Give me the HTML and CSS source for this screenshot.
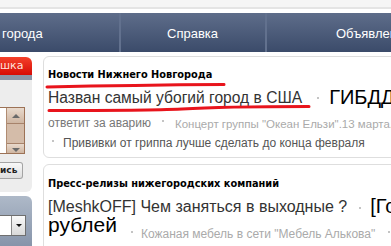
FILE: index.html
```html
<!DOCTYPE html>
<html lang="ru">
<head>
<meta charset="utf-8">
<link rel="stylesheet" href="styles.css">
</head>
<body>
<div class="top"></div>
<nav class="nav">
  <div class="nav-item i1">города</div>
  <div class="nav-item i2">Справка</div>
  <div class="nav-item i3">Объявления</div>
</nav>
<div class="layout">
  <aside class="side">
    <div class="side-head">шка</div>
    <div class="side-strip"></div>
    <div class="side-panel">
      <div class="ta">
        <div class="ta-field"></div>
        <div class="ta-scroll">
          <span class="sb-btn up"></span>
          <span class="sb-track"></span>
          <span class="sb-btn down"></span>
        </div>
      </div>
      <div class="btn">ись</div>
    </div>
    <div class="side-panel2">
      <div class="sel"><span class="sel-field"></span><span class="sel-btn"></span></div>
    </div>
  </aside>
  <main class="main">
    <section class="card c1">
      <h2 class="title">Новости Нижнего Новгорода</h2>
      <div class="row r1">
        <span class="big h1">Назван самый убогий город в США</span>
        <span class="dot d1"></span>
        <span class="huge">ГИБДД</span>
      </div>
      <div class="row r2">
        <span class="mid">ответит за аварию</span>
        <span class="dot d2"></span>
        <span class="small">Концерт группы "Океан Ельзи".13 марта.Концерт</span>
      </div>
      <div class="row r3">
        <span class="dot d3"></span>
        <span class="mid dark">Прививки от гриппа лучше сделать до конца февраля</span>
      </div>
      <svg class="marker" width="300" height="60" viewBox="0 0 300 60">
        <path d="M3 30 Q 90 28 180 27.5" />
        <path d="M5 53.5 C 60 53.5, 115 53, 138 52 C 170 50, 220 49.5, 265 49.5" />
      </svg>
    </section>
    <section class="card c2">
      <h2 class="title">Пресс-релизы нижегородских компаний</h2>
      <div class="row r4">
        <span class="big">[MeshkOFF] Чем заняться в выходные ?</span>
        <span class="dot d4"></span>
        <span class="huge">[Городской</span>
      </div>
      <div class="row r5">
        <span class="huge rub">рублей</span>
        <span class="dot d5"></span>
        <span class="small k">Кожаная мебель в сети "Мебель Алькова"</span>
        <span class="dot d6"></span>
        <span class="huge">Новый</span>
      </div>
    </section>
  </main>
</div>
</body>
</html>
```
FILE: styles.css
```css
html, body {
  margin: 0;
  padding: 0;
  background: #fff;
}
body {
  width: 391px;
  height: 246px;
  overflow: hidden;
  font-family: "Liberation Sans", Arial, sans-serif;
}
.top {
  height: 7px;
  background: #f5f5f5;
  border-bottom: 2px solid #e4e4e4;
  margin-bottom: 4px;
}
.nav {
  display: flex;
  height: 39px;
  width: 600px;
  background: linear-gradient(#5e6d8a, #3b4b6a);
}
.nav-item {
  display: flex;
  align-items: center;
  box-sizing: border-box;
  color: #fff;
  font-size: 13px;
  white-space: nowrap;
  padding-top: 1px;
}
.i1 { width: 119px; padding-left: 2px; }
.i2 { width: 146px; padding-left: 46px; border-left: 2px solid #62718e; }
.i3 { width: 200px; padding-left: 69px; border-left: 2px solid #62718e; }

.layout {
  display: grid;
  grid-template-columns: 32px 600px;
  column-gap: 11px;
  padding-top: 4px;
}
.side {
  padding-top: 1px;
  display: flex;
  flex-direction: column;
}
.side-head {
  height: 18px;
  background: linear-gradient(#f4412a, #d60c07);
  border-radius: 0 6px 0 0;
  color: #ffe2dc;
  font-family: "DejaVu Sans", sans-serif;
  font-size: 11px;
  line-height: 18px;
  text-align: right;
  padding-right: 16px;
  white-space: nowrap;
  overflow: hidden;
}
.side-strip {
  height: 5px;
  background: #8a96a9;
}
.side-panel {
  height: 112px;
  box-sizing: border-box;
  background: #ededed;
  border-radius: 0 0 6px 0;
  padding-top: 27px;
}
.ta {
  display: flex;
  width: 25px;
  height: 47px;
  box-sizing: border-box;
  border: 1px solid #9c7256;
  border-left: none;
  background: #fff;
}
.ta-field { width: 6px; background: #fff; }
.ta-scroll {
  flex: 1;
  display: flex;
  flex-direction: column;
  background: #d6bfac;
  border-left: 1px solid #b08c72;
}
.sb-btn {
  height: 16px;
  box-sizing: border-box;
  background: linear-gradient(#e8d9cc, #cfb6a2);
  border-bottom: 1px solid #a7836b;
  display: flex;
  align-items: center;
  justify-content: center;
}
.sb-btn.down { border-bottom: none; border-top: 1px solid #a7836b; height: 10px; align-items: flex-start; padding-top: 4px; }
.sb-track { flex: 1; background: #d4bca9; }
.sb-btn::before {
  content: "";
  border-left: 4px solid transparent;
  border-right: 4px solid transparent;
}
.sb-btn.up::before { border-bottom: 4px solid #6a6a6a; }
.sb-btn.down::before { border-top: 4px solid #6a6a6a; }
.btn {
  margin-top: 8px;
  width: 23px;
  height: 17px;
  box-sizing: border-box;
  border: 1px solid #a4a4a4;
  border-left: none;
  border-radius: 0 3px 3px 0;
  background: linear-gradient(#f8f8f8, #dedede);
  font-family: "DejaVu Sans", sans-serif;
  font-size: 9px;
  font-weight: bold;
  color: #222;
  line-height: 15px;
  text-align: right;
  padding-right: 9px;
  overflow: hidden;
  white-space: nowrap;
}
.side-panel2 {
  margin-top: 4px;
  height: 60px;
  background: linear-gradient(#aeb9c8, #7f8da4);
  border-radius: 0 6px 0 0;
  padding-top: 19px;
  box-sizing: border-box;
}
.sel {
  display: flex;
  width: 26px;
  height: 21px;
  box-sizing: border-box;
  border: 1px solid #6f6f6f;
  border-left: none;
  background: #fff;
}
.sel-field { width: 11px; }
.sel-btn {
  flex: 1;
  border-left: 1px solid #8a8a8a;
  background: linear-gradient(#fafafa, #d9d9d9);
  display: flex;
  align-items: center;
  justify-content: center;
}
.sel-btn::before {
  content: "";
  border-left: 3px solid transparent;
  border-right: 3px solid transparent;
  border-top: 3px solid #111;
}

.main {
  display: flex;
  flex-direction: column;
}
.card {
  position: relative;
  border: 1px solid #dedede;
  border-radius: 6px;
  box-sizing: border-box;
  padding-left: 4px;
}
.c1 { height: 102px; padding-top: 11px; }
.c2 { margin-top: 6px; height: 100px; padding-top: 12px; }
.title {
  margin: 0;
  font-family: "DejaVu Sans", sans-serif;
  font-size: 9.8px;
  line-height: 13px;
  font-weight: bold;
  color: #000;
  white-space: nowrap;
}
.row {
  display: flex;
  align-items: flex-end;
  white-space: nowrap;
}
.row span { line-height: normal; }
.r1 { height: 26px; }
.r2 { height: 23px; }
.r3 { height: 20px; }
.r4 { height: 26px; }
.r5 { height: 19px; }
.big { font-size: 16px; color: #333; }
.big.h1 { font-size: 15.6px; }
.row .huge { font-size: 20px; line-height: 20px; color: #000; }
.row .huge.rub { font-size: 21px; }
.mid { font-size: 12px; color: #777; }
.mid.dark { color: #555; }
.small { font-size: 11.5px; color: #aaa; }
.small.k { font-size: 12px; margin-bottom: -6px; }
.dot {
  width: 2px;
  height: 2px;
  background: #c4c4c4;
  flex: none;
}
.d1 { margin: 0 10px 8px 15px; }
.d2 { margin: 0 11px 8px 11px; }
.d3 { margin: 0 9px 8px 4px; }
.d4 { margin: 0 9px 7px 12px; }
.d5 { margin: 0 8px 2px 14px; }
.d6 { margin: 0 8px 2px 13px; }
.marker {
  position: absolute;
  left: 0;
  top: 0;
  pointer-events: none;
}
.marker path {
  fill: none;
  stroke: #e8141c;
  stroke-width: 3;
  stroke-linecap: round;
}
```
